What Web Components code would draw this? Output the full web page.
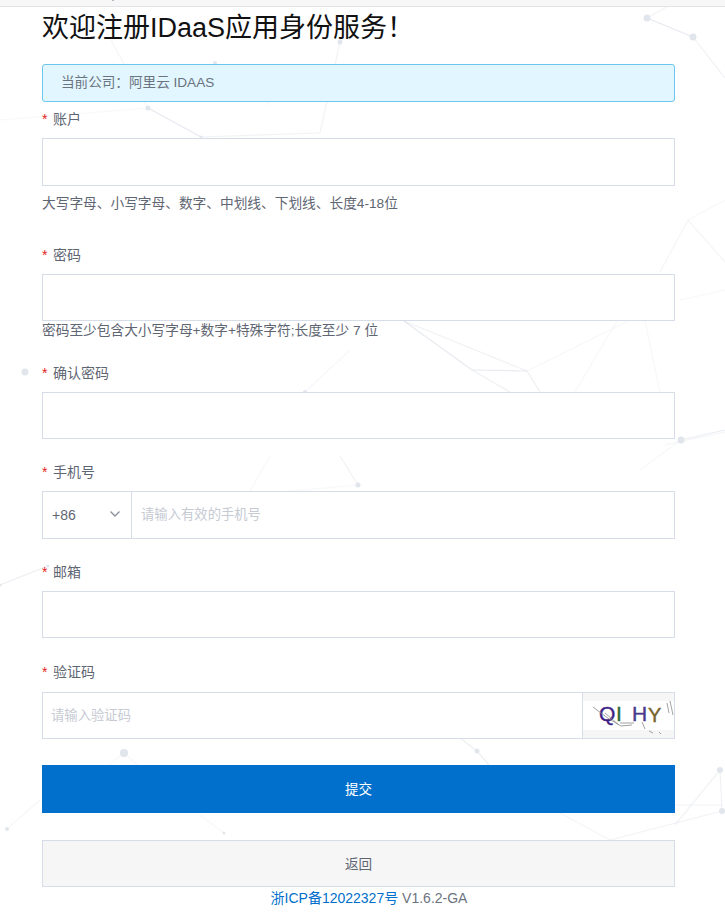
<!DOCTYPE html>
<html lang="zh-CN">
<head>
<meta charset="utf-8">
<title>欢迎注册IDaaS应用身份服务</title>
<style>
    html, body {
        margin: 0;
        height: 912px;
        overflow: hidden;
        background-color: #fff;
        font-family: "Liberation Sans", "Noto Sans CJK SC", sans-serif;
        font-size: 14px;
        --color-border: #d7dde8;
        --color-main: #0070cc;
        --color-text: #5f6673;
    }
</style>
</head>
<body>
<reg-network></reg-network>
<reg-topbar></reg-topbar>
<reg-page>
    <reg-title>欢迎注册IDaaS应用身份服务！</reg-title>
    <reg-alert>当前公司：阿里云 IDAAS</reg-alert>

    <reg-field label="账户" help="大写字母、小写字母、数字、中划线、下划线、长度4-18位" style="--top: 6px; --help-top: 8px; --help-line: 20px">
        <reg-input style="--h: 48px"></reg-input>
    </reg-field>
    <reg-field label="密码" help="密码至少包含大小写字母+数字+特殊字符;长度至少 7 位" style="--top: 30px; --help-top: 1px; --help-line: 18px">
        <reg-input></reg-input>
    </reg-field>
    <reg-field label="确认密码" style="--top: 22px">
        <reg-input></reg-input>
    </reg-field>
    <reg-field label="手机号" style="--top: 22px">
        <reg-input style="--h: 48px" placeholder="请输入有效的手机号">
            <reg-prefix slot="before">+86</reg-prefix>
        </reg-input>
    </reg-field>
    <reg-field label="邮箱" style="--top: 22px">
        <reg-input></reg-input>
    </reg-field>
    <reg-field label="验证码" style="--top: 23px; --gap: 11px">
        <reg-input placeholder="请输入验证码" style="--pad: 0 8px">
            <reg-captcha slot="after"></reg-captcha>
        </reg-input>
    </reg-field>

    <reg-button kind="primary" style="--top: 26px; --h: 48px">提交</reg-button>
    <reg-button style="--top: 27px; --h: 47px">返回</reg-button>
    <reg-footer></reg-footer>
</reg-page>

<script>
class RegNetwork extends HTMLElement {
    constructor() {
        super();
        this.attachShadow({ mode: 'open' });
    }

    connectedCallback() {
        // x1, y1, x2, y2, opacity
        const lines = [
            [647,18,693,37,1],[693,37,725,78,.6],[647,18,672,4,.5],[148,108,201,137,1],[201,137,320,133,.5],
            [320,133,340,42,.5],[100,20,148,108,.4],[0,120,148,108,.3],[215,63,270,105,.3],[340,42,350,10,.3],
            [404,321,472,370,.9],[472,370,527,371,.9],[527,371,540,392,.7],[472,370,510,392,.6],[404,321,527,371,.6],
            [305,392,350,350,.3],[527,371,630,320,.3],[575,392,617,321,.3],[645,321,660,392,.3],
            [681,440,725,430,.8],[681,440,640,470,.3],[725,432,665,445,.4],
            [358,485,340,456,.6],[358,485,250,495,.3],[270,456,250,491,.3],
            [48,566,0,585,.7],[124,753,100,772,.3],[124,753,145,772,.3],[7,829,40,800,.3],[224,833,200,815,.3],
            [477,751,495,772,.7],[460,738,477,751,.7],[720,770,675,825,.5],[720,770,722,811,.6],[722,811,610,840,.5],
            [675,805,722,805,.5],[560,813,610,840,.4],[688,220,725,262,.4],[688,220,660,272,.4],[725,200,688,220,.3],
            [725,290,680,300,.3]
        ];
        const nodes = [
            [647,18,3.5],[693,37,3.5],[340,42,2.5],[148,108,2.5],[201,137,1.5],[215,63,2],
            [25,372,3.5],[681,440,3.5],[358,485,2.5],[48,566,1.5],[0,585,1.5],[124,753,4],
            [7,829,2],[224,833,1.5],[477,751,2.5],[720,770,3],[722,811,3],[305,392,2]
        ];
        this.shadowRoot.innerHTML = `
            <style>
                :host {
                    display: block;
                    position: absolute;
                    left: 0;
                    top: 0;
                    width: 725px;
                    height: 912px;
                }

                svg {
                    display: block;
                }

                line {
                    stroke: #e6e9ef;
                    stroke-width: 1.2;
                }

                circle {
                    fill: #e1e5ec;
                }
            </style>
            <svg width="725" height="912" viewBox="0 0 725 912">
                ${lines.map(l => `<line x1="${l[0]}" y1="${l[1]}" x2="${l[2]}" y2="${l[3]}" opacity="${l[4]}"></line>`).join('')}
                ${nodes.map(n => `<circle cx="${n[0]}" cy="${n[1]}" r="${n[2]}"></circle>`).join('')}
            </svg>
        `;
    }
}

class RegTopbar extends HTMLElement {
    constructor() {
        super();
        this.attachShadow({ mode: 'open' });
    }

    connectedCallback() {
        this.shadowRoot.innerHTML = `
            <style>
                :host {
                    display: block;
                    position: relative;
                    height: 6px;
                    background-color: #f7f7f8;
                    border-bottom: 1px solid #e3e4e8;
                }

                :host::after {
                    content: "";
                    position: absolute;
                    left: 112px;
                    top: 0;
                    width: 2px;
                    height: 1px;
                    background-color: #b5b8c0;
                }
            </style>
        `;
    }
}

class RegPage extends HTMLElement {
    constructor() {
        super();
        this.attachShadow({ mode: 'open' });
    }

    connectedCallback() {
        this.shadowRoot.innerHTML = `
            <style>
                :host {
                    display: block;
                    position: relative;
                    width: 633px;
                    margin-left: 42px;
                }
            </style>
            <slot></slot>
        `;
    }
}

class RegTitle extends HTMLElement {
    constructor() {
        super();
        this.attachShadow({ mode: 'open' });
    }

    connectedCallback() {
        this.shadowRoot.innerHTML = `
            <style>
                :host {
                    display: block;
                    height: 40px;
                    font-size: 27px;
                    line-height: 42px;
                    color: #111;
                    white-space: nowrap;
                }
            </style>
            <slot></slot>
        `;
    }
}

class RegAlert extends HTMLElement {
    constructor() {
        super();
        this.attachShadow({ mode: 'open' });
    }

    connectedCallback() {
        this.shadowRoot.innerHTML = `
            <style>
                :host {
                    display: block;
                    box-sizing: border-box;
                    height: 38px;
                    margin-top: 17px;
                    padding-left: 18px;
                    background-color: #e1f6fe;
                    border: 1px solid #6cc6ef;
                    border-radius: 3px;
                    font-size: 13.6px;
                    line-height: 36px;
                    color: #6b7380;
                }
            </style>
            <slot></slot>
        `;
    }
}

class RegField extends HTMLElement {
    constructor() {
        super();
        this.attachShadow({ mode: 'open' });
    }

    connectedCallback() {
        const help = this.getAttribute("help");
        this.shadowRoot.innerHTML = `
            <style>
                :host {
                    display: block;
                    margin-top: var(--top, 0);
                }

                .field__label {
                    display: flex;
                    gap: 4px;
                    height: 20px;
                    line-height: 22px;
                    margin-bottom: var(--gap, 10px);
                    color: var(--color-text);
                }

                .field__label i {
                    width: 7px;
                    font-style: normal;
                    color: #e2231a;
                }

                .field__help {
                    margin-top: var(--help-top, 0);
                    font-size: 13.7px;
                    line-height: var(--help-line, 20px);
                    color: var(--color-text);
                }
            </style>
            <div class="field__label"><i>*</i><span>${this.getAttribute("label")}</span></div>
            <slot></slot>
            ${help ? `<div class="field__help">${help}</div>` : ''}
        `;
    }
}

class RegInput extends HTMLElement {
    constructor() {
        super();
        this.attachShadow({ mode: 'open' });
    }

    connectedCallback() {
        this.shadowRoot.innerHTML = `
            <style>
                :host {
                    display: flex;
                    box-sizing: border-box;
                    height: var(--h, 47px);
                    background-color: #fff;
                    border: 1px solid var(--color-border);
                }

                input {
                    flex: 1;
                    min-width: 0;
                    box-sizing: border-box;
                    padding: var(--pad, 0 9px 2px);
                    border: 0;
                    outline: 0;
                    background: transparent;
                    font: inherit;
                    font-size: 13.33px;
                }

                input::placeholder {
                    color: #c6cad3;
                    opacity: 1;
                }
            </style>
            <slot name="before"></slot>
            <input type="text" placeholder="${this.getAttribute("placeholder") ?? ''}">
            <slot name="after"></slot>
        `;
    }
}

class RegPrefix extends HTMLElement {
    constructor() {
        super();
        this.attachShadow({ mode: 'open' });
    }

    connectedCallback() {
        this.shadowRoot.innerHTML = `
            <style>
                :host {
                    display: flex;
                    align-items: center;
                    justify-content: space-between;
                    box-sizing: border-box;
                    width: 89px;
                    padding: 0 10px 0 9px;
                    border-right: 1px solid var(--color-border);
                    color: var(--color-text);
                }

                svg {
                    display: block;
                    margin-top: -3px;
                }
            </style>
            <slot></slot>
            <svg width="12" height="8" viewBox="0 0 12 8" fill="none" stroke="#8b929e" stroke-width="1.4">
                <path d="M1.5 1.5 L6 6 L10.5 1.5"></path>
            </svg>
        `;
    }
}

class RegCaptcha extends HTMLElement {
    constructor() {
        super();
        this.attachShadow({ mode: 'open' });
    }

    connectedCallback() {
        this.shadowRoot.innerHTML = `
            <style>
                :host {
                    display: block;
                    width: 91px;
                    border-left: 1px solid var(--color-border);
                    background-color: #f6f6f7;
                }

                svg {
                    display: block;
                }

                text {
                    font-family: "Liberation Sans", sans-serif;
                    font-size: 21px;
                    stroke-width: 0.4;
                }
            </style>
            <svg width="91" height="45" viewBox="0 0 91 45">
                <rect x="0" y="8" width="91" height="29" fill="#fff"></rect>
                <text x="16" y="28" fill="#3e1f85" stroke="#3e1f85">Q</text>
                <text x="33" y="28" fill="#2a6a3a" stroke="#2a6a3a">I</text>
                <text x="49" y="28" fill="#4b3a8c" stroke="#4b3a8c">H</text>
                <text x="65" y="29" fill="#76622c" stroke="#76622c" style="font-size:20px">Y</text>
                <g fill="none" stroke="#8a8a8a" stroke-width="0.8">
                    <path d="M10 14 L26 26 L38 33 L49 32"></path>
                    <path d="M22 20 L36 32"></path>
                    <path d="M37 30 L51 30"></path>
                    <path d="M59 29 L62 36"></path>
                    <path d="M66 38 L70 40 M76 39 L78 41"></path>
                    <path d="M84 10 L86 20 M87 8 L90 22"></path>
                </g>
            </svg>
        `;
    }
}

class RegButton extends HTMLElement {
    constructor() {
        super();
        this.attachShadow({ mode: 'open' });
    }

    connectedCallback() {
        this.shadowRoot.innerHTML = `
            <style>
                :host {
                    display: block;
                    margin-top: var(--top, 0);
                }

                button {
                    display: block;
                    box-sizing: border-box;
                    width: 100%;
                    height: var(--h, 47px);
                    padding: 0 0 2px;
                    font: inherit;
                    font-size: 13.6px;
                    color: var(--color-text);
                    background-color: #f6f6f7;
                    border: 1px solid var(--color-border);
                }

                button.primary {
                    color: #fff;
                    background-color: var(--color-main);
                    border-color: var(--color-main);
                }
            </style>
            <button type="button" class="${this.getAttribute("kind") ?? ''}"><slot></slot></button>
        `;
    }
}

class RegFooter extends HTMLElement {
    constructor() {
        super();
        this.attachShadow({ mode: 'open' });
    }

    connectedCallback() {
        this.shadowRoot.innerHTML = `
            <style>
                :host {
                    display: block;
                    margin-top: 1px;
                    padding-left: 21px;
                    line-height: 20px;
                    text-align: center;
                    color: #6b7380;
                }

                a {
                    color: var(--color-main);
                    text-decoration: none;
                }
            </style>
            <a href="#">浙ICP备12022327号</a> V1.6.2-GA
        `;
    }
}

window.customElements.define('reg-network', RegNetwork);
window.customElements.define('reg-topbar', RegTopbar);
window.customElements.define('reg-page', RegPage);
window.customElements.define('reg-title', RegTitle);
window.customElements.define('reg-alert', RegAlert);
window.customElements.define('reg-field', RegField);
window.customElements.define('reg-input', RegInput);
window.customElements.define('reg-prefix', RegPrefix);
window.customElements.define('reg-captcha', RegCaptcha);
window.customElements.define('reg-button', RegButton);
window.customElements.define('reg-footer', RegFooter);
</script>
</body>
</html>
